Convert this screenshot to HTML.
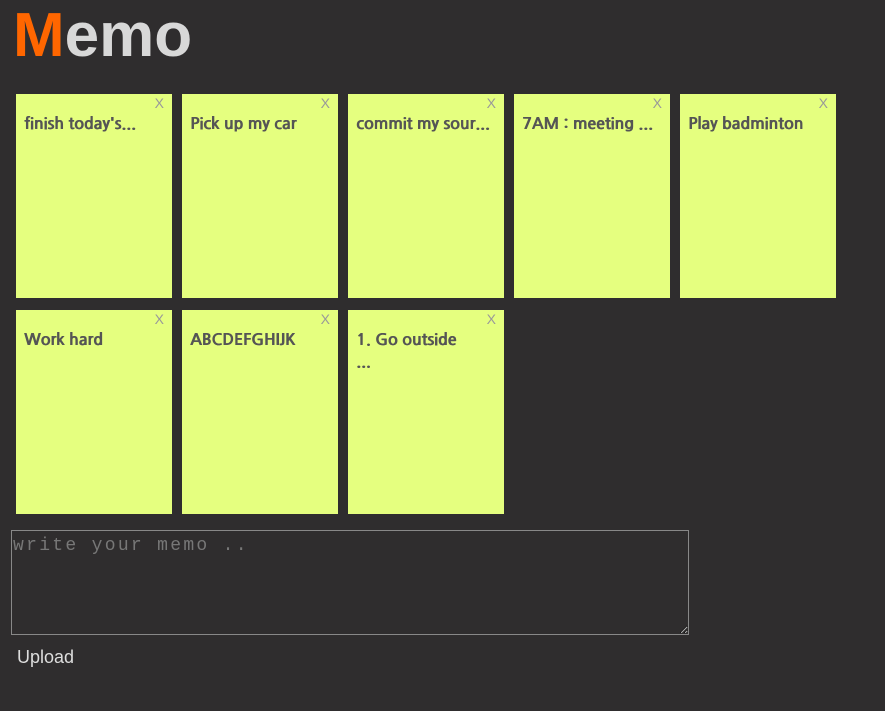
<!DOCTYPE html>
<html><head><style>
body{margin:0;background:#2f2d2e;width:885px;height:711px;overflow:hidden;font-family:"Liberation Sans",sans-serif;}
h1{position:absolute;left:13px;top:0px;margin:0;font-size:62px;font-weight:bold;color:#d8d8d8;letter-spacing:0px;}
h1 span{color:#ff6600}
.n{position:absolute;width:156px;height:204px;background:#e5ff7f;}
.n .t{position:absolute;left:8px;top:20px;width:140px;font-weight:bold;font-size:16px;color:#555;line-height:22px;font-family:"NanumGothic","Liberation Sans",sans-serif;white-space:pre;overflow:hidden;text-shadow:0.6px 0 0 #555;}
.n .x{position:absolute;right:8px;top:1px;color:#999;font-size:14px;}
textarea{position:absolute;left:11px;top:530px;width:678px;height:105px;box-sizing:border-box;background:#2f2d2e;border:1px solid #888;font-family:"Liberation Mono",monospace;font-size:18px;color:#ccc;padding:5px 1px;resize:both;outline:none;letter-spacing:2.3px;}
textarea::placeholder{color:#777}
.up{position:absolute;left:17px;top:647px;color:#ddd;font-size:18px;}
</style></head><body>
<h1><span>M</span>emo</h1>
<div class="n" style="left:16px;top:94px"><div class="x">X</div><div class="t">finish today's...</div></div>
<div class="n" style="left:182px;top:94px"><div class="x">X</div><div class="t">Pick up my car</div></div>
<div class="n" style="left:348px;top:94px"><div class="x">X</div><div class="t">commit my sour...</div></div>
<div class="n" style="left:514px;top:94px"><div class="x">X</div><div class="t">7AM : meeting ...</div></div>
<div class="n" style="left:680px;top:94px"><div class="x">X</div><div class="t">Play badminton</div></div>
<div class="n" style="left:16px;top:310px"><div class="x">X</div><div class="t">Work hard</div></div>
<div class="n" style="left:182px;top:310px"><div class="x">X</div><div class="t">ABCDEFGHIJK</div></div>
<div class="n" style="left:348px;top:310px"><div class="x">X</div><div class="t">1. Go outside
...</div></div>
<textarea placeholder="write your memo .."></textarea>
<div class="up">Upload</div>
</body></html>
